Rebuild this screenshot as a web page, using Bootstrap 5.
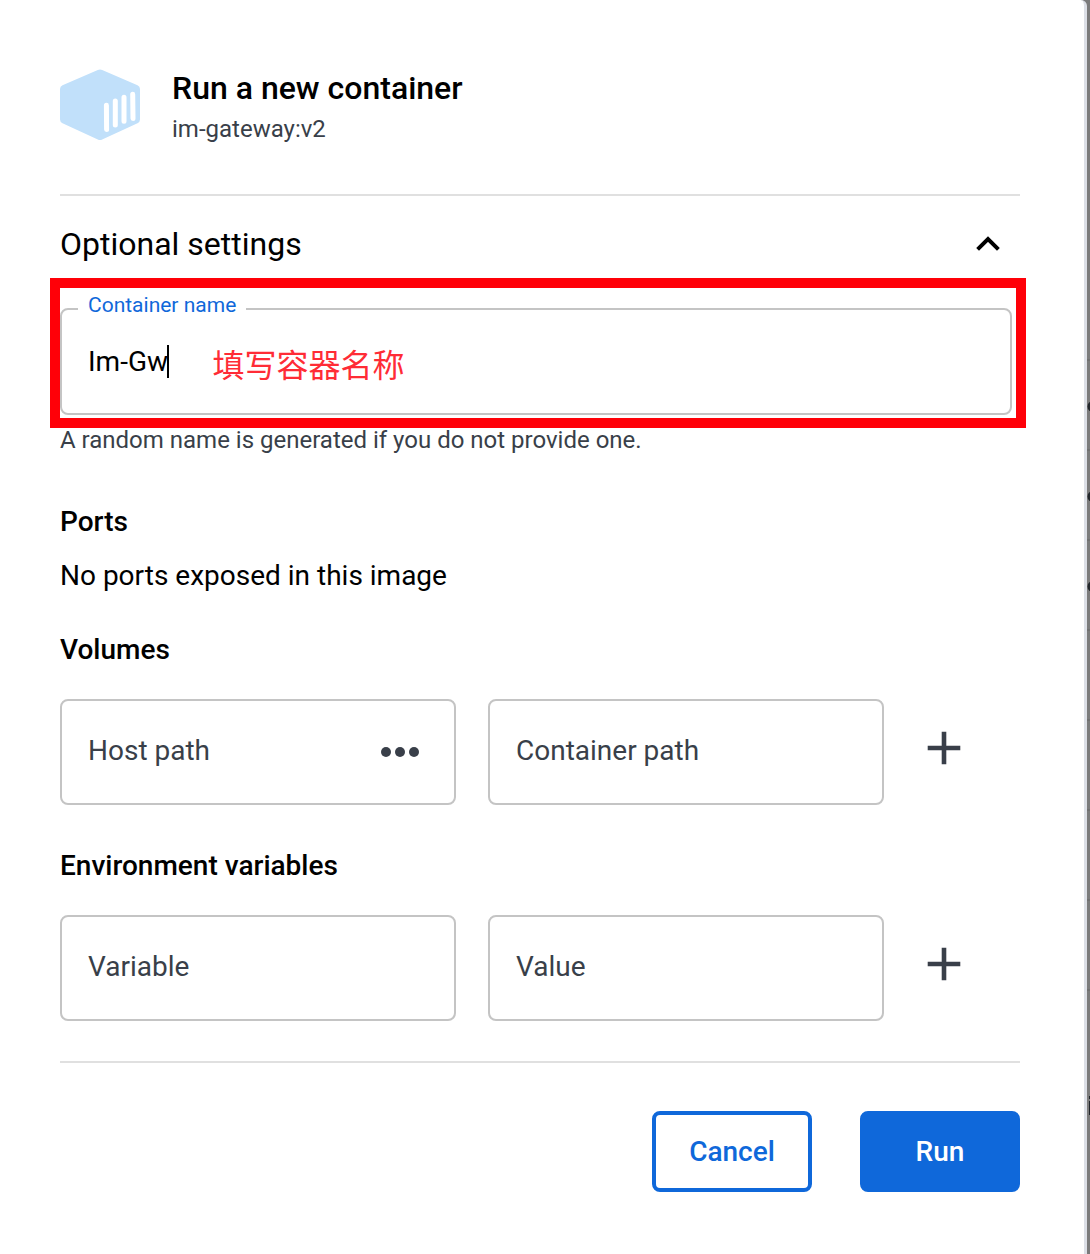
<!DOCTYPE html>
<html lang="en">
<head>
<meta charset="utf-8">
<title>Run a new container</title>
<link href="https://cdn.jsdelivr.net/npm/bootstrap@5.3.0/dist/css/bootstrap.min.css" rel="stylesheet">
<style>
body{font-family:Roboto,"Noto Sans CJK SC",sans-serif;background:#7b7b7b;color:#000;width:1090px;height:1254px;overflow:hidden}
.dialog-panel{width:1087px;height:1254px;background:#fff;border-right:3px solid #dcdfe6;border-top-right-radius:6px;padding:68px 64px 0 60px}
.backdrop-strip{width:3px;height:1254px}
.head-row{height:126px;gap:32px}
.title-text{font-size:32px;font-weight:500;line-height:40px}
.sub-text{font-size:24px;line-height:36px;margin-top:3px;color:#393f49}
.rule{height:2px;background:#e0e0e0}
.settings-row{height:112px;padding:0 20px 16px 0}
.settings-text{font-size:32px;line-height:40px}
.field{border:2px solid #c4c4c4;border-radius:8px;height:106px;padding:0 26px 2px;font-size:28px;color:#393f49}
.name-field{height:107px;width:952px;color:#000;padding-bottom:0}
.float-label{left:16px;top:-19px;padding:0 10px;width:168px;background:#fff;color:#0f68da;font-size:21px;line-height:28px;white-space:nowrap}
.caret{width:2px;height:33px;background:#000;margin-left:-1px}
.note-text{color:#ff2c36;font-family:"Noto Sans CJK SC",sans-serif;font-size:32px;line-height:40px;margin:2px 0 0 43.500px}
.highlight{left:-12px;top:-32px;width:976px;height:150px;border:10px solid #ff0008}
.help-text{font-size:24px;line-height:30px;margin-top:10px;color:#393f49}
.sec-title{font-size:28px;font-weight:500;line-height:36px}
.pair{gap:32px}
.pair .field{width:396px}
.plus{margin:0 0 8px 11px}
.dots{margin-top:2px}
.act{width:160px;height:81px;border-radius:8px;border:4px solid #0f68da;font-size:28px;font-weight:500;color:#0f68da;padding:0}
.act-run{background:#0f68da;color:#fff}
</style>
<script src="https://cdn.jsdelivr.net/npm/bootstrap@5.3.0/dist/js/bootstrap.bundle.min.js"></script>
</head>
<body class="d-flex m-0">
<main class="dialog-panel flex-shrink-0">
  <header class="head-row d-flex align-items-start">
    <svg width="80" height="74" viewBox="0 0 80 74" class="flex-shrink-0">
      <path d="M37.8 2.1Q40 .9 42.200 2.100L77.500 17.300Q80 18.500 80 21V51.500Q80 54 77.500 55.300L42.200 71.500Q40 72.700 37.800 71.500L2.500 55.300Q0 54 0 51.500V21Q0 18.500 2.500 17.300Z" fill="#c1e0fa"/>
      <path d="M46.400 37.200L46.600 61.400M55.300 33L55.300 57M64 29.200L64 53.200M72.700 26.300L73 50.500" stroke="#fff" stroke-width="5" stroke-linecap="round"/>
    </svg>
    <div>
      <div class="title-text">Run a new container</div>
      <div class="sub-text">im-gateway:v2</div>
    </div>
  </header>
  <div class="rule"></div>
  <div class="settings-row d-flex justify-content-between align-items-center">
    <div class="settings-text">Optional settings</div>
    <svg width="24" height="16" viewBox="0 0 24 16"><path d="M1.600 13.300L12 3L22.400 13.300" fill="none" stroke="#000" stroke-width="4"/></svg>
  </div>
  <div class="field name-field d-flex align-items-center position-relative">
    <span class="float-label position-absolute">Container name</span>
    <span>Im-Gw</span><span class="caret"></span>
    <span class="note-text" lang="zh-CN">填写容器名称</span>
    <span class="highlight position-absolute"></span>
  </div>
  <div class="help-text">A random name is generated if you do not provide one.</div>
  <h2 class="sec-title mb-0" style="margin-top:49px">Ports</h2>
  <div class="sec-title fw-normal" style="margin-top:18px">No ports exposed in this image</div>
  <h2 class="sec-title mb-0" style="margin-top:38px">Volumes</h2>
  <div class="pair d-flex align-items-center" style="margin-top:31px">
    <div class="field d-flex align-items-center justify-content-between"><span>Host path</span>
      <svg class="dots" width="56" height="12" viewBox="0 0 56 12"><g fill="#393f49"><circle cx="14" cy="6" r="5"/><circle cx="28" cy="6" r="5"/><circle cx="42" cy="6" r="5"/></g></svg></div>
    <div class="field d-flex align-items-center">Container path</div>
    <svg class="plus" width="34" height="34" viewBox="0 0 34 34"><path d="M17 .7V33.300M.7 17H33.300" stroke="#393f49" stroke-width="4.600"/></svg>
  </div>
  <h2 class="sec-title mb-0" style="margin-top:43px">Environment variables</h2>
  <div class="pair d-flex align-items-center" style="margin-top:31px">
    <div class="field d-flex align-items-center">Variable</div>
    <div class="field d-flex align-items-center">Value</div>
    <svg class="plus" width="34" height="34" viewBox="0 0 34 34"><path d="M17 .7V33.300M.7 17H33.300" stroke="#393f49" stroke-width="4.600"/></svg>
  </div>
  <div class="rule" style="margin-top:40px"></div>
  <footer class="d-flex justify-content-end gap-5" style="margin-top:48px">
    <button class="btn act">Cancel</button>
    <button class="btn act act-run">Run</button>
  </footer>
</main>
<svg class="backdrop-strip flex-shrink-0" viewBox="0 0 3 1254"><path d="M0 360h3M0 450h3M0 540h3M0 630h3M0 720h3M0 810h3M0 900h3M0 990h3" stroke="#707070" stroke-width="2"/><g fill="#22262b"><circle cx="6" cy="406.500" r="5.500"/><circle cx="6" cy="496.500" r="5.500"/><circle cx="6" cy="586.500" r="5.500"/><path d="M2 1096h1v3h-1zM2 1101h1v14h-1z"/></g></svg>
</body>
</html>
